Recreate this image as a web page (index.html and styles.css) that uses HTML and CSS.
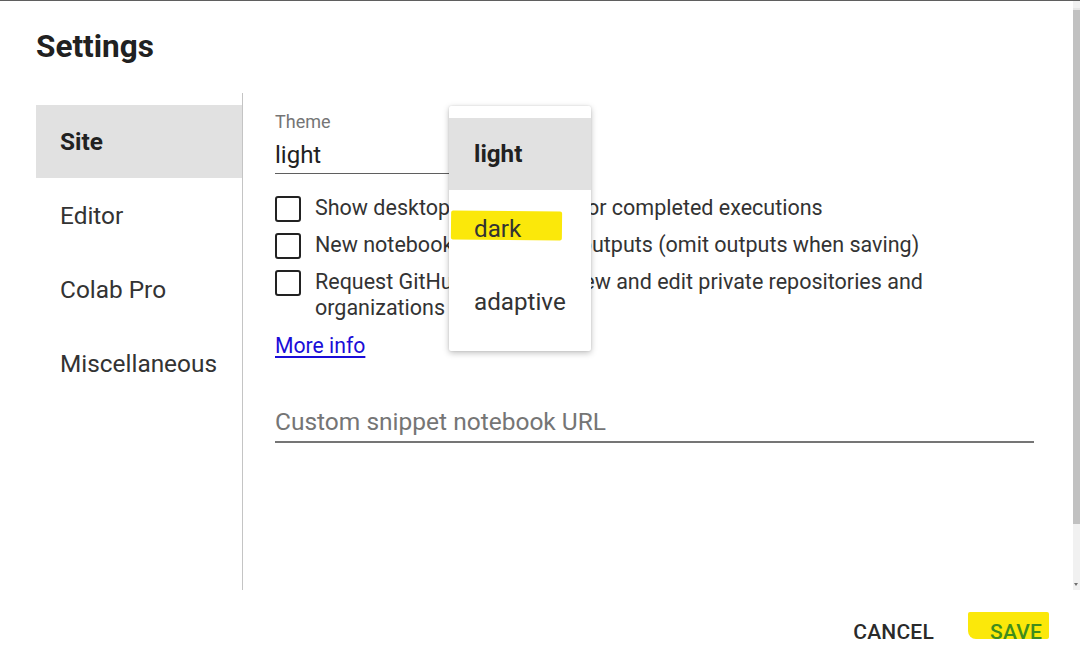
FILE: index.html
```html
<!DOCTYPE html>
<html>
<head>
<meta charset="utf-8">
<link rel="stylesheet" href="styles.css">
</head>
<body>
<div class="dialog">
  <div class="body">
    <div class="scrollarea">
      <h1 class="title">Settings</h1>
      <div class="main">
        <nav class="sidebar">
          <div class="nav-item active">Site</div>
          <div class="nav-item">Editor</div>
          <div class="nav-item">Colab Pro</div>
          <div class="nav-item">Miscellaneous</div>
        </nav>
        <div class="content">
          <div class="select">
            <div class="select-label">Theme</div>
            <div class="select-value">light</div>
          </div>
          <div class="checks">
            <label class="check"><span class="box"></span><span class="check-text">Show desktop notifications for completed executions</span></label>
            <label class="check"><span class="box"></span><span class="check-text">New notebooks use private outputs (omit outputs when saving)</span></label>
            <label class="check"><span class="box"></span><span class="check-text">Request GitHub access to view and edit private repositories and organizations</span></label>
          </div>
          <a class="more" href="#">More info</a>
          <div class="field">Custom snippet notebook URL</div>

          <div class="menu">
            <div class="menu-item selected">light</div>
            <div class="menu-item"><span class="mark mark-dark"></span><span class="menu-text">dark</span></div>
            <div class="menu-item">adaptive</div>
          </div>
        </div>
      </div>
    </div>
    <div class="scrollbar">
      <div class="sb-arrow up"></div>
      <div class="sb-thumb"></div>
      <div class="sb-track"></div>
      <div class="sb-arrow down"></div>
    </div>
  </div>
  <div class="footer">
    <button class="btn cancel">CANCEL</button>
    <button class="btn save"><span class="mark mark-save"></span><span class="btn-text">SAVE</span></button>
  </div>
</div>
</body>
</html>
```
FILE: styles.css
```css
* { box-sizing: border-box; }
html, body { margin: 0; padding: 0; background: #fff; }
body {
  font-family: Roboto, "Liberation Sans", sans-serif;
  color: #212121;
  width: 1080px;
  height: 667px;
  overflow: hidden;
}
.dialog {
  border-top: 1px solid #5f5f5f;
  height: 667px;
  display: flex;
  flex-direction: column;
}
.body {
  display: flex;
  height: 589px;
}
.scrollarea {
  flex: 1;
  padding: 0 39px 0 36px;
  display: flex;
  flex-direction: column;
}
.title {
  margin: 28px 0 0;
  font-size: 31.5px;
  line-height: 36px;
  font-weight: 700;
  color: #212121;
}
.main {
  margin-top: 28px;
  flex: 1;
  display: flex;
}
.sidebar {
  width: 207px;
  border-right: 1px solid #c4c4c4;
  padding-top: 12px;
}
.nav-item {
  height: 74px;
  display: flex;
  align-items: center;
  padding-left: 24px;
  font-size: 24.4px;
  color: #333;
}
.nav-item.active {
  background: #e1e1e1;
  font-weight: 700;
  color: #212121;
  height: 73px;
}
.content {
  position: relative;
  flex: 1;
  padding: 19px 0 0 32px;
}
.select {
  width: 260px;
  border-bottom: 1px solid #5f5f5f;
  padding-bottom: 4px;
}
.select-label {
  font-size: 18px;
  line-height: 20px;
  color: #757575;
}
.select-value {
  margin-top: 9px;
  font-size: 24px;
  line-height: 28px;
  color: #212121;
}
.checks {
  margin-top: 22px;
  display: flex;
  flex-direction: column;
  gap: 11px;
}
.check {
  display: flex;
  align-items: flex-start;
  gap: 14px;
  width: 670px;
}
.box {
  flex: none;
  width: 26px;
  height: 26px;
  border: 2.5px solid #222;
  border-radius: 3px;
}
.check-text {
  font-size: 21.5px;
  line-height: 26px;
  color: #333;
  margin-top: -1px;
}
.more {
  display: inline-block;
  margin-top: 12px;
  font-size: 21.2px;
  line-height: 26px;
  color: #1a0dd8;
  text-decoration: underline;
  text-underline-offset: 3px;
}
.field {
  margin-top: 49px;
  font-size: 24.5px;
  line-height: 28px;
  color: #757575;
  padding-bottom: 5px;
  border-bottom: 2px solid #757575;
}
.menu {
  position: absolute;
  left: 206px;
  top: 13px;
  width: 142px;
  padding: 12px 0 15px;
  background: #fff;
  box-shadow: 0 2px 6px rgba(0,0,0,0.25), 0 0 2px rgba(0,0,0,0.12);
  border-radius: 2px;
}
.menu-item {
  position: relative;
  height: 73px;
  display: flex;
  align-items: center;
  padding-left: 25px;
  padding-top: 4px;
  font-size: 24.2px;
  color: #333;
}
.menu-item.selected {
  background: #e1e1e1;
  font-weight: 700;
  color: #212121;
  height: 72px;
  padding-top: 0;
}
.menu-text, .btn-text { position: relative; }
.mark {
  position: absolute;
  background: #fbe80a;
  border-radius: 2px;
}
.mark-dark {
  left: 2px;
  top: 21px;
  width: 111px;
  height: 29px;
  transform: rotate(0.6deg);
}
.scrollbar {
  width: 7px;
  display: flex;
  flex-direction: column;
  background: #f1f1f1;
  padding-top: 3px;
}
.sb-arrow { height: 6px; background: #f1f1f1; }
.sb-arrow.up { border-bottom: 2px solid #e6e6e6; }
.sb-thumb { height: 514px; background: #c1c1c1; }
.sb-track { flex: 1; background: #f1f1f1; }
.sb-arrow.down { height: 8px; position: relative; }
.sb-arrow.down::after {
  content: "";
  position: absolute;
  left: 1px; top: 1px;
  border-left: 2px solid transparent;
  border-right: 2px solid transparent;
  border-top: 3px solid #707070;
}
.footer {
  flex: 1;
  display: flex;
  justify-content: flex-end;
  align-items: center;
  padding-right: 30px;
  gap: 40px;
  padding-top: 6px;
}
.btn {
  position: relative;
  background: none;
  border: none;
  font-family: Roboto, "Liberation Sans", sans-serif;
  font-size: 21px;
  font-weight: 500;
  padding: 4px 8px;
  letter-spacing: 0.2px;
}
.cancel { color: #2a2a2a; }
.save { color: #3f8d1c; }
.mark-save {
  left: -14px;
  top: -4px;
  width: 81px;
  height: 27px;
  border-radius: 2px 2px 2px 8px;
}
```
